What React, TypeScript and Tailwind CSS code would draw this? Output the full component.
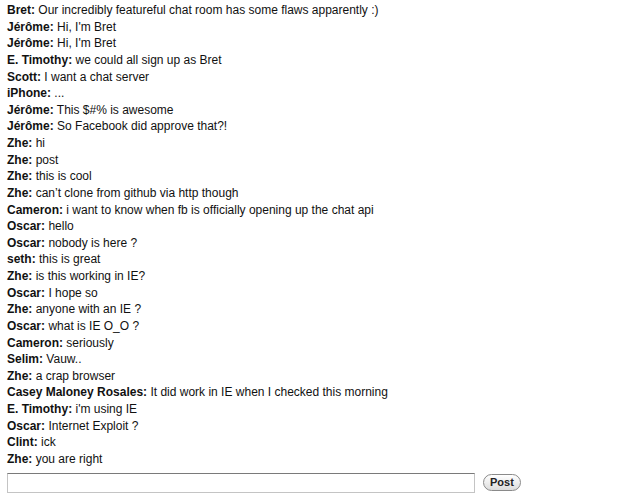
const MESSAGES: [string, string][] = [
  ['Bret', 'Our incredibly featureful chat room has some flaws apparently :)'],
  ['Jérôme', "Hi, I'm Bret"],
  ['Jérôme', "Hi, I'm Bret"],
  ['E. Timothy', 'we could all sign up as Bret'],
  ['Scott', 'I want a chat server'],
  ['iPhone', '...'],
  ['Jérôme', 'This $#% is awesome'],
  ['Jérôme', 'So Facebook did approve that?!'],
  ['Zhe', 'hi'],
  ['Zhe', 'post'],
  ['Zhe', 'this is cool'],
  ['Zhe', 'can’t clone from github via http though'],
  ['Cameron', 'i want to know when fb is officially opening up the chat api'],
  ['Oscar', 'hello'],
  ['Oscar', 'nobody is here ?'],
  ['seth', 'this is great'],
  ['Zhe', 'is this working in IE?'],
  ['Oscar', 'I hope so'],
  ['Zhe', 'anyone with an IE ?'],
  ['Oscar', 'what is IE O_O ?'],
  ['Cameron', 'seriously'],
  ['Selim', 'Vauw..'],
  ['Zhe', 'a crap browser'],
  ['Casey Maloney Rosales', 'It did work in IE when I checked this morning'],
  ['E. Timothy', "i'm using IE"],
  ['Oscar', 'Internet Exploit ?'],
  ['Clint', 'ick'],
  ['Zhe', 'you are right'],
]

export default function App() {
  return (
    <div className="w-[630px] h-[499px] bg-white px-[7px] pt-[2px] text-[12px] text-[#111] [font-family:'Liberation_Sans',Arial,sans-serif]">
      <div className="flex flex-col">
        {MESSAGES.map(([name, text], i) => (
          <div key={i} className="leading-[16.63px] whitespace-nowrap">
            <b className="font-bold">{name}:</b> {text}
          </div>
        ))}
      </div>
      <div className="flex items-center mt-[5px] gap-[8px]">
        <input
          type="text"
          className="w-[468px] h-[20px] border border-[#c4c4c4] border-t-[#7a7a7a] bg-white outline-none"
        />
        <button className="h-[17px] px-[6px] rounded-full border border-[#8a8a8a] bg-gradient-to-b from-white to-[#dcdcdc] text-[11px] font-bold leading-none text-[#222] [font-family:'Liberation_Sans_Narrow','Liberation_Sans',sans-serif]">
          Post
        </button>
      </div>
    </div>
  )
}
